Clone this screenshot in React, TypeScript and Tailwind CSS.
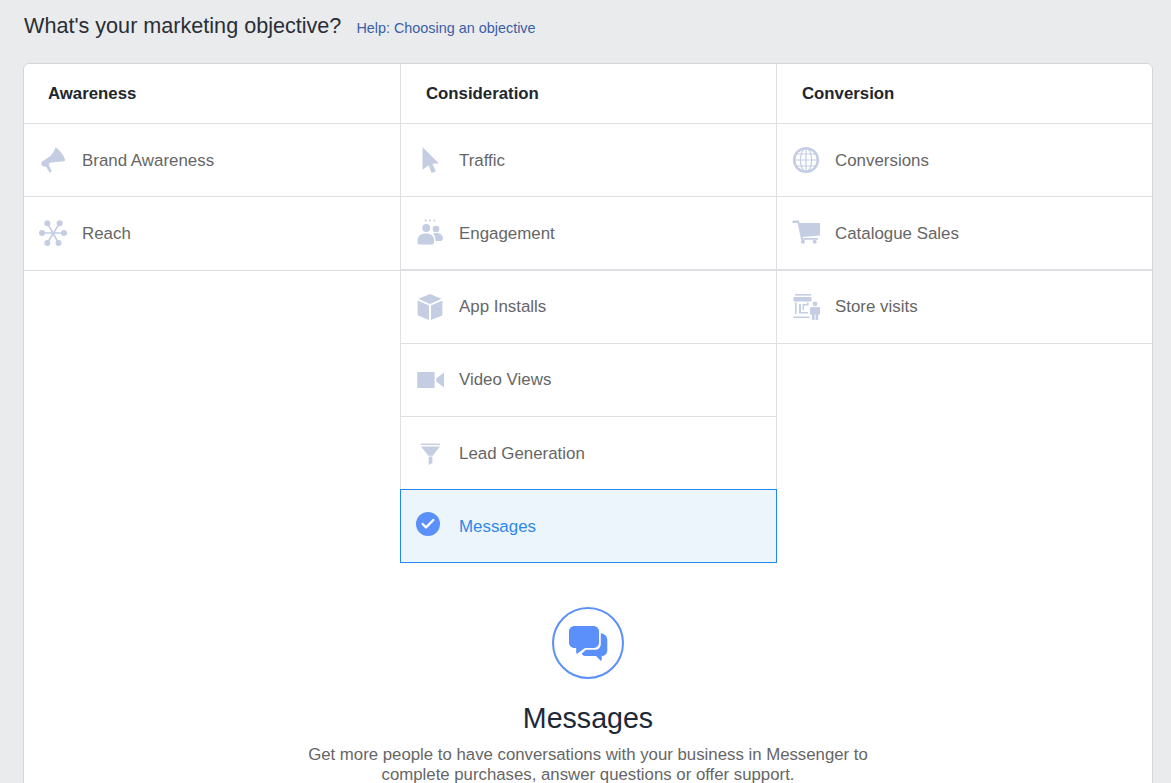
import { Check } from "lucide-react";
import type { ReactNode } from "react";

const iconFill = "#c4cde2";

function Megaphone() {
  return (
    <svg width="28" height="28" viewBox="0 0 28 28" fill={iconFill}>
      <path d="M16.6 1.3 C20 3.4 25 9.6 26 13.6 C26.2 14.6 25.8 15.2 25 15.2 L10.6 16.8 L10 19.6 L12.6 24.8 C12.9 25.8 10.9 27 10.2 26 L7 20.6 C4.6 21.4 2.2 20 2.2 17.6 C2.2 16 3.2 14.9 4.6 14.4 L10 11 C12.6 9 15.4 5.4 16.6 1.3 Z" />
    </svg>
  );
}

function ReachIcon() {
  return (
    <svg width="28" height="28" viewBox="0 0 28 28" fill={iconFill} stroke={iconFill}>
      <g strokeWidth="1.6">
        <path d="M2.7 14 H25 M8.3 4 L19.5 24 M20.7 4 L8.3 24" fill="none" />
      </g>
      <g stroke="none">
        <circle cx="3" cy="14" r="3" />
        <circle cx="25" cy="14" r="3" />
        <circle cx="8.3" cy="4.2" r="3" />
        <circle cx="20.7" cy="4.2" r="3" />
        <circle cx="8.3" cy="24" r="3" />
        <circle cx="19.5" cy="24" r="3" />
      </g>
    </svg>
  );
}

function CursorIcon() {
  return (
    <svg width="28" height="28" viewBox="0 0 28 28" fill={iconFill}>
      <path d="M6.5 1 L23 17.5 L16.5 17.8 L19.8 25.6 L15.6 27 L12.6 19.2 L6.5 23.8 Z" />
    </svg>
  );
}

function PeopleIcon() {
  return (
    <svg width="28" height="28" viewBox="0 0 28 28" fill={iconFill}>
      <circle cx="9.6" cy="1.4" r="1" />
      <circle cx="14" cy="1.4" r="1" />
      <circle cx="18.4" cy="1.4" r="1" />
      <circle cx="10.2" cy="9" r="4" />
      <circle cx="20" cy="10" r="3.3" />
      <path d="M1.6 23.5 V21 C1.6 17 5 14.5 10 14.5 C15 14.5 18 17 18 21 V23.5 C18 24.6 17 25.6 15.6 25.6 H3.6 C2.4 25.6 1.6 24.6 1.6 23.5 Z" />
      <path d="M17 14.6 C18 14.2 19 14 20.2 14 C24.4 14 27 16.4 27 19.6 C27 21 26 22 24.8 22 H19.6 C19.6 19 18.8 16.4 17 14.6 Z" />
    </svg>
  );
}

function BoxIcon() {
  return (
    <svg width="28" height="28" viewBox="0 0 28 28" fill={iconFill}>
      <path d="M14 1 L25.6 5.8 L14 11 L2.4 5.8 Z" />
      <path d="M1.6 7.6 L13 12.6 V27 L3 23 C2 22.6 1.6 22 1.6 21 Z" />
      <path d="M26.4 7.6 L15 12.6 V27 L25 23 C26 22.6 26.4 22 26.4 21 Z" />
    </svg>
  );
}

function VideoIcon() {
  return (
    <svg width="28" height="28" viewBox="0 0 28 28" fill={iconFill}>
      <rect x="1.2" y="6" width="17.5" height="16" rx="1" />
      <path d="M28 6.5 V21.5 L20.2 15.4 V12.6 Z" />
    </svg>
  );
}

function FunnelIcon() {
  return (
    <svg width="28" height="28" viewBox="0 0 28 28" fill={iconFill}>
      <rect x="4.7" y="4.6" width="19.4" height="1.4" />
      <path d="M5 7.4 H24 L16.6 16.8 H12.4 Z" />
      <path d="M12.6 17.6 H16.4 V24 L12.6 26 Z" />
    </svg>
  );
}

function GlobeIcon() {
  return (
    <svg width="28" height="28" viewBox="0 0 28 28" fill="none" stroke={iconFill}>
      <circle cx="14" cy="14" r="11.8" strokeWidth="2.6" />
      <ellipse cx="14" cy="14" rx="5.6" ry="11.8" strokeWidth="1.2" />
      <path d="M14 2 V26 M2.5 14 H25.5 M4 8 H24 M4 20 H24" strokeWidth="1.2" />
    </svg>
  );
}

function CartIcon() {
  return (
    <svg width="30" height="28" viewBox="0 0 30 28" fill={iconFill}>
      <path d="M0.6 0.6 H7.5 L8.2 3.4 H30 V16.8 L11.2 18.2 L11.6 19.4 H28 V21.2 H9.8 L6 3.2 H0.6 Z" />
      <circle cx="11.7" cy="23.4" r="2.2" />
      <circle cx="24.3" cy="23.4" r="2.2" />
    </svg>
  );
}

function StoreIcon() {
  return (
    <svg width="28" height="28" viewBox="0 0 28 28" fill={iconFill}>
      <g transform="translate(1 0)">
        <rect x="2" y="1" width="16" height="1.6" />
        <rect x="0.5" y="4" width="18" height="4.4" rx="0.6" />
        <path d="M2 9.5 H3.6 V21 H2 Z M14 9.5 H15.6 V12.5 H14 Z" />
        <path d="M6 11 H8 V19 H15 V20.5 H6 Z" />
        <path d="M9.5 11 H14 V12.5 H11 V17 H9.5 Z" />
        <rect x="0.5" y="23.5" width="16" height="1.6" />
        <circle cx="22" cy="10.8" r="2.4" />
        <path d="M17 15 C17 14.2 17.8 14 18.6 14 H25.4 C26.2 14 27 14.4 27 15.2 V21.4 H25.2 V27 H22.5 V21.5 H21.6 V27 H18.9 V21.4 H17 Z" />
      </g>
    </svg>
  );
}

function Row({ icon, label, thick }: { icon: ReactNode; label: string; thick?: boolean }) {
  return (
    <div className={`flex h-[73.25px] items-center border-[#dddfe2] pl-[15px] ${thick ? "border-b-2 pt-px" : "border-b"}`}>
      <span className="flex w-[28px] justify-center">{icon}</span>
      <span className="ml-[15px] text-[16.9px] leading-[25px] text-[#666666]">{label}</span>
    </div>
  );
}

function ColumnHead({ title, inset }: { title: string; inset?: boolean }) {
  return (
    <div
      className={`flex h-[60px] items-center border-b border-[#dddfe2] text-[16.8px] font-bold text-[#22262d] ${inset ? "pl-[25px]" : "pl-[24px]"}`}
    >
      {title}
    </div>
  );
}

export default function App() {
  return (
    <div
      className="h-[783px] overflow-hidden bg-[#e9ebed] pl-[23px] pr-[18px]"
      style={{ fontFamily: '"Liberation Sans", Arial, sans-serif' }}
    >
      <div className="flex h-[63px] items-start pt-[12px] pl-px">
        <h1 className="text-[21.6px] leading-[28px] text-[#2a2e35]">What's your marketing objective?</h1>
        <a className="ml-[15px] pt-[6px] text-[14.4px] leading-[20px] text-[#3b5ea6]">Help: Choosing an objective</a>
      </div>
      <div className="h-[800px] rounded-t-[6px] border border-[#d3d6da] bg-white">
        <div className="grid grid-cols-[377px_376px_375px] items-start">
          <div className="h-[426px] border-r border-[#dddfe2]">
            <ColumnHead title="Awareness" />
            <Row icon={<Megaphone />} label="Brand Awareness" />
            <Row icon={<ReachIcon />} label="Reach" />
          </div>
          <div className="h-[499px] border-r border-[#dddfe2]">
            <ColumnHead title="Consideration" inset />
            <Row icon={<CursorIcon />} label="Traffic" />
            <Row icon={<PeopleIcon />} label="Engagement" thick />
            <Row icon={<BoxIcon />} label="App Installs" />
            <Row icon={<VideoIcon />} label="Video Views" />
            <Row icon={<FunnelIcon />} label="Lead Generation" />
            <div className="-mt-px -mr-px -ml-px flex h-[73.25px] items-center border border-[#2088ee] bg-[#edf5fc] pl-[15px]">
              <span className="mb-[4px] flex h-[24px] w-[24px] items-center justify-center rounded-full bg-[#5b8ff9]">
                <Check size={16} strokeWidth={3.5} className="text-white" />
              </span>
              <span className="ml-[19px] pt-[2px] text-[16.9px] leading-[24px] text-[#2d88e6]">Messages</span>
            </div>
          </div>
          <div>
            <ColumnHead title="Conversion" inset />
            <Row icon={<GlobeIcon />} label="Conversions" />
            <Row icon={<CartIcon />} label="Catalogue Sales" thick />
            <Row icon={<StoreIcon />} label="Store visits" />
          </div>
        </div>
        <div className="flex flex-col items-center pt-[44px]">
          <div className="flex h-[72px] w-[72px] items-center justify-center rounded-full border-[2.5px] border-[#5b8ff9]">
            <svg width="42" height="38" viewBox="1 1 42 38" fill="#5b8ff9">
              <path d="M8.5 3 H27.5 C30.6 3 33 5.4 33 8.5 V19.5 C33 22.6 30.6 25 27.5 25 H19 L11.4 30.6 C10.9 31 10.2 30.6 10.2 30 V25 H8.5 C5.4 25 3 22.6 3 19.5 V8.5 C3 5.4 5.4 3 8.5 3 Z" />
              <path d="M34.7 10.3 C38.6 11 41.3 13 41.3 17 V27 C41.3 31 38.5 33 35.7 33 V37 C35.7 37.7 35 38 34.5 37.5 L30 33 H19 C17.5 33 16.3 32 15.7 30.5 L20.2 26.8 H28.6 C32.6 26.8 34.8 24.4 34.8 20.4 V13 C34.8 12 34.9 11 34.7 10.3 Z" />
            </svg>
          </div>
          <h2 className="mt-[21px] text-[28.6px] leading-[36px] text-[#1d2939]">Messages</h2>
          <p className="mt-[9px] w-[620px] text-center text-[16.8px] leading-[20px] text-[#666666]">
            Get more people to have conversations with your business in Messenger to complete purchases, answer questions or offer support.
          </p>
        </div>
      </div>
    </div>
  );
}
